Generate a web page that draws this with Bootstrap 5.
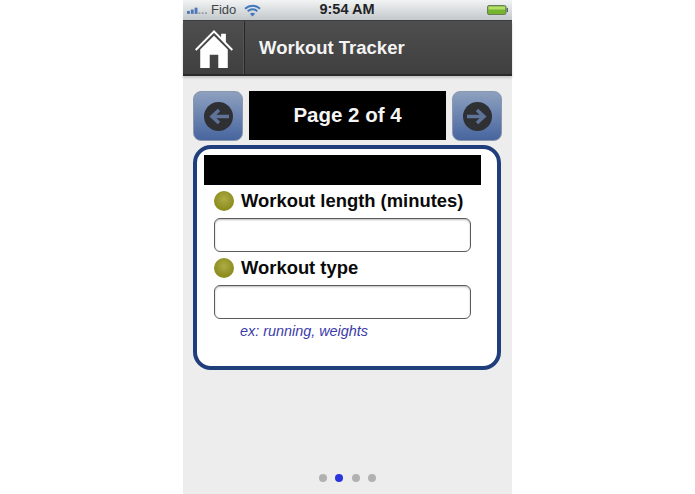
<!DOCTYPE html>
<html lang="en">
<head>
<meta charset="utf-8">
<title>Workout Tracker</title>
<link href="https://cdn.jsdelivr.net/npm/bootstrap@5.3.0/dist/css/bootstrap.min.css" rel="stylesheet">
<style>
html, body { height: 494px; overflow: hidden; background: #fff; }
body { font-family: "Liberation Sans", Arial, sans-serif; }
.phone { width: 329px; height: 494px; margin-left: 183px; background: #ededed; }
.status-row { height: 21px; padding: 0 4px 0 4px; background: linear-gradient(#f2f4f4, #c3c8cb); border-bottom: 1px solid #3b3d3e; font-size: 13px; color: #3f4549; }
.status-left { width: 106px; gap: 4px; }
.status-time { width: 108px; font-weight: 700; font-size: 14.5px; color: #1f2326; text-align: center; }
.status-right { flex: 1; }
.app-head { height: 55px; background: linear-gradient(#4e4e4e, #474747 50%, #3f3f3f); border-bottom: 2px solid #2a2a2a; box-shadow: 0 2px 2px #c8c8c8; }
.home-cell { width: 62px; height: 100%; padding-top: 3px; border-right: 1px solid #262626; box-shadow: inset -1px 0 0 #555; }
.app-title { padding: 1px 0 0 14px; color: #f4f4f4; font-weight: 700; font-size: 18.5px; }
.pager { margin: 15px 10px 0; gap: 6px; height: 50px; }
.pager-btn { width: 50px; height: 50px; padding: 0; border: 1px solid #8a97ac; border-radius: 8px; background: linear-gradient(#8da0bf, #47659f); }
.pager-label { width: 197px; height: 49px; background: #000; color: #f5f5f5; font-weight: 700; font-size: 20.5px; }
.form-panel { margin: 4px 11px 0 10px; height: 225px; padding: 6px 7px; border: 4px solid #1f3e7b; border-radius: 18px; background: #fff; }
.panel-black { width: 277px; height: 30px; background: #000; }
.field-block { margin-left: 10px; width: 257px; }
.field-head { height: 20px; gap: 7px; font-weight: 700; font-size: 18.4px; color: #0a0a0a; }
.first-head { margin-top: 6px; }
.next-head { margin-top: 6px; }
.bullet { width: 20px; height: 20px; flex: none; border-radius: 50%; background: radial-gradient(circle at 50% 40%, #adad44, #8f8f22 60%, #8b8b14); }
.form-control.field-input { height: 34px; margin-top: 7px; padding: 0 8px; border: 1px solid #5c5c5c; border-radius: 6px; background: #fff; box-shadow: inset 0 1px 2px #bbb; }
.field-hint { margin: 4px 0 0 26px; font-style: italic; font-size: 14.4px; line-height: 16px; color: #3a3aa8; }
.dots { margin-top: 104px; gap: 8.5px; }
.dot { width: 8px; height: 8px; border-radius: 50%; background: #b1b1b1; }
.dot-on { background: #2a35dc; }
</style>
</head>
<body>
<div class="phone d-flex flex-column">
  <div class="status-row d-flex align-items-center flex-shrink-0">
    <div class="status-left d-flex align-items-center">
      <svg width="20" height="9" viewBox="0 0 21 9" aria-hidden="true"><g fill="#4d76b6"><rect x="0" y="5" width="3" height="3"/><rect x="4" y="3.500" width="3" height="4.500"/><rect x="8" y="1.500" width="3" height="6.500"/></g><g fill="#8a9099"><rect x="12" y="6.500" width="2" height="1.500"/><rect x="15.500" y="6.500" width="2" height="1.500"/><rect x="19" y="6.500" width="2" height="1.500"/></g></svg>
      <span class="status-carrier">Fido</span>
      <svg class="ms-1" width="17" height="13" viewBox="0 0 17 13" aria-hidden="true"><g fill="none" stroke="#3f78bd" stroke-width="2"><path d="M1 4.700C5.500.8 11.500.8 16 4.700"/><path d="M3.700 7.300c2.900-2.500 6.700-2.500 9.600 0"/></g><path d="M5.900 9.700c1.600-1.300 3.600-1.300 5.200 0L8.500 12.500z" fill="#3f78bd"/></svg>
    </div>
    <div class="status-time">9:54 AM</div>
    <div class="status-right d-flex justify-content-end align-items-center">
      <svg width="21" height="10" viewBox="0 0 21 10" aria-hidden="true"><rect x="0.500" y="0.500" width="18.500" height="9" rx="1.500" fill="#75b52e" stroke="#6d7a5c"/><rect x="1.500" y="1.500" width="16.500" height="3" fill="#b4e06a"/><rect x="19.500" y="3" width="1.500" height="4" fill="#5e6670"/></svg>
    </div>
  </div>
  <div class="app-head d-flex align-items-center flex-shrink-0">
    <div class="home-cell d-flex align-items-center justify-content-center">
      <svg width="40" height="38" viewBox="0 0 41 40" aria-hidden="true"><path fill="#fff" d="M28 4h5v8.500l7.500 7.800-1.500 1.500L20.500 3 2 21.800.5 20.300 20.500 0 28 7.600z"/><path fill="#fff" d="M20.500 6 35 20.500V40H25V26H16v14H6V20.500z"/></svg>
    </div>
    <div class="app-title">Workout Tracker</div>
  </div>
  <div class="pager d-flex flex-shrink-0">
    <button type="button" class="pager-btn btn d-flex align-items-center justify-content-center" aria-label="Previous">
      <svg width="29" height="29" viewBox="0 0 29 29" aria-hidden="true"><circle cx="14.500" cy="14.500" r="14.500" fill="#2f3033"/><path d="M25 14.500H10M15 8l-7 6.500 7 6.500" fill="none" stroke="#5f7399" stroke-width="3.500"/></svg>
    </button>
    <div class="pager-label d-flex align-items-center justify-content-center">Page 2 of 4</div>
    <button type="button" class="pager-btn btn d-flex align-items-center justify-content-center" aria-label="Next">
      <svg width="29" height="29" viewBox="0 0 29 29" aria-hidden="true"><circle cx="14.500" cy="14.500" r="14.500" fill="#2f3033"/><path d="M4 14.500h15M14 8l7 6.500-7 6.500" fill="none" stroke="#5f7399" stroke-width="3.500"/></svg>
    </button>
  </div>
  <div class="form-panel flex-shrink-0">
    <div class="panel-black"></div>
    <div class="field-block">
      <div class="field-head first-head d-flex align-items-center"><span class="bullet"></span><span>Workout length (minutes)</span></div>
      <input class="form-control field-input" type="text" aria-label="Workout length (minutes)">
      <div class="field-head next-head d-flex align-items-center"><span class="bullet"></span><span>Workout type</span></div>
      <input class="form-control field-input" type="text" aria-label="Workout type">
      <div class="field-hint">ex: running, weights</div>
    </div>
  </div>
  <div class="dots d-flex justify-content-center">
    <span class="dot"></span><span class="dot dot-on"></span><span class="dot"></span><span class="dot"></span>
  </div>
</div>
<script src="https://cdn.jsdelivr.net/npm/bootstrap@5.3.0/dist/js/bootstrap.bundle.min.js"></script>
</body>
</html>
